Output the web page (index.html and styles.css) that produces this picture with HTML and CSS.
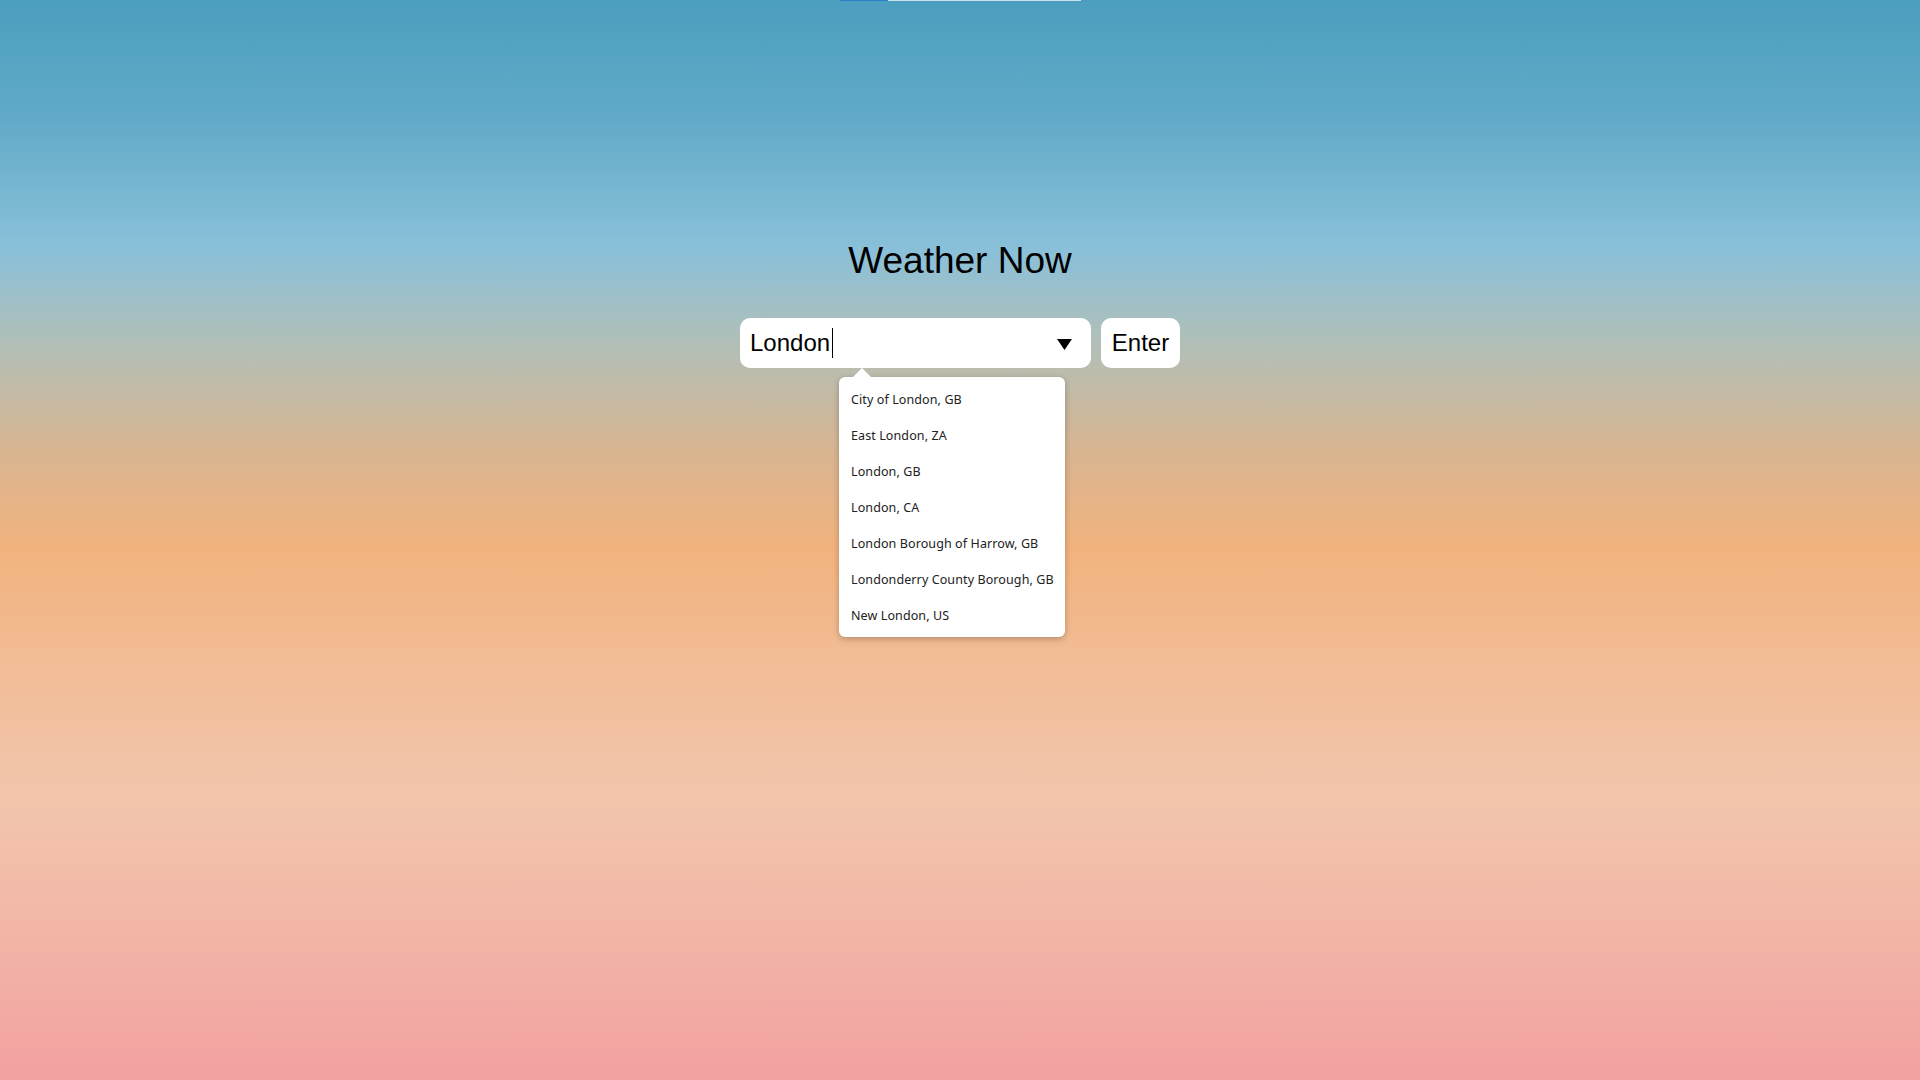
FILE: index.html
```html
<!DOCTYPE html>
<html lang="en">
<head>
<meta charset="utf-8">
<title>Weather Now</title>
<link rel="stylesheet" href="styles.css">
</head>
<body>
<div class="topbar"><div class="topbar-fill"></div></div>
<main class="app">
  <h1 class="title">Weather Now</h1>
  <form class="search">
    <div class="field">
      <div class="field-text"><span>London</span><span class="caret"></span></div>
      <svg class="arrow" width="15" height="11" viewBox="0 0 15 11"><polygon points="0,0 15,0 7.5,11" fill="#000"/></svg>
      <div class="popup">
        <div class="popup-tip"></div>
        <ul class="options">
          <li>City of London, GB</li>
          <li>East London, ZA</li>
          <li>London, GB</li>
          <li>London, CA</li>
          <li>London Borough of Harrow, GB</li>
          <li>Londonderry County Borough, GB</li>
          <li>New London, US</li>
        </ul>
      </div>
    </div>
    <button class="enter" type="button">Enter</button>
  </form>
</main>
</body>
</html>
```

FILE: styles.css
```css
html, body {
  margin: 0;
  padding: 0;
}
body {
  min-height: 100vh;
  height: 1080px;
  font-family: "Liberation Sans", Arial, sans-serif;
  background: linear-gradient(to bottom,
    #4c9ebf 0px,
    #5fa9c7 110px,
    #8ac0d9 250px,
    #b2bfb7 345px,
    #d8b591 450px,
    #f2b37e 548px,
    #f2bb93 650px,
    #f2c6ad 795px,
    #f2b5a6 935px,
    #f2a1a1 1080px);
  overflow: hidden;
}
.topbar {
  width: 241px;
  height: 1px;
  margin: 0 auto;
  background: #c9dfe9;
}
.topbar-fill {
  width: 48px;
  height: 1px;
  background: #2a7fc9;
}
.app {
  display: flex;
  flex-direction: column;
  align-items: center;
}
.title {
  margin: 238px 0 0;
  font-size: 37px;
  line-height: 43px;
  font-weight: 400;
  color: #000;
}
.search {
  display: flex;
  gap: 10px;
  margin-top: 36px;
}
.field {
  position: relative;
  width: 351px;
  height: 50px;
  box-sizing: border-box;
  background: #fff;
  border-radius: 10px;
  display: flex;
  align-items: center;
  padding: 0 19px 0 10px;
}
.field-text {
  flex: 1;
  display: flex;
  align-items: center;
  font-size: 24px;
  color: #000;
  height: 50px;
}
.caret {
  display: inline-block;
  width: 1px;
  height: 30px;
  background: #000;
  margin-left: 2px;
}
.arrow {
  display: block;
  margin-top: 2px;
}
.enter {
  width: 79px;
  height: 50px;
  border: none;
  border-radius: 10px;
  background: #fff;
  font-family: "Liberation Sans", Arial, sans-serif;
  font-size: 24px;
  color: #000;
  padding: 0;
}
.popup {
  position: absolute;
  left: 99px;
  top: 59px;
  width: 226px;
}
.popup-tip {
  position: absolute;
  left: 14px;
  top: -9px;
  width: 0;
  height: 0;
  border-left: 9px solid transparent;
  border-right: 9px solid transparent;
  border-bottom: 9px solid #fff;
}
.options {
  list-style: none;
  margin: 0;
  padding: 4px 0;
  background: #fff;
  border-radius: 6px;
  box-shadow: 0 2px 6px rgba(0, 0, 0, 0.25);
}
.options li {
  box-sizing: border-box;
  height: 36px;
  padding: 2px 0 0 12px;
  line-height: 34px;
  font-family: "Noto Sans", sans-serif;
  font-size: 12.5px;
  letter-spacing: 0.1px;
  color: #222;
  white-space: nowrap;
}
```
